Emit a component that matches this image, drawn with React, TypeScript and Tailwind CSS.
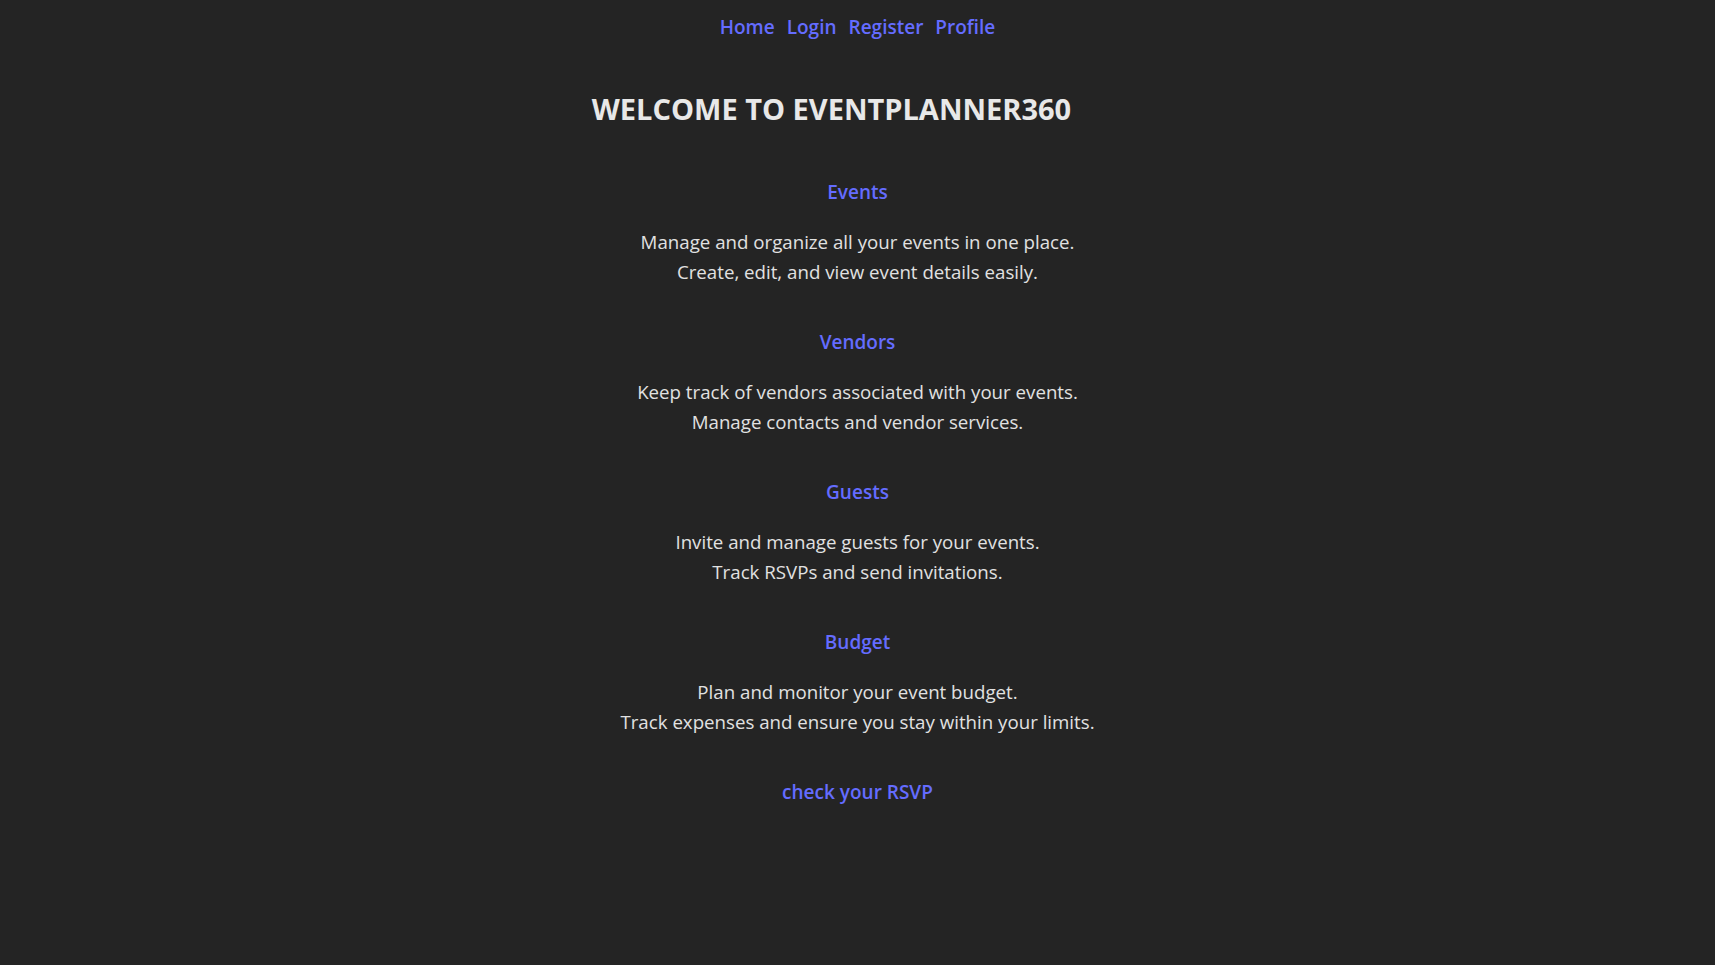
import React from "react";

const sections = [
  { title: "Events", lines: ["Manage and organize all your events in one place.", "Create, edit, and view event details easily."] },
  { title: "Vendors", lines: ["Keep track of vendors associated with your events.", "Manage contacts and vendor services."] },
  { title: "Guests", lines: ["Invite and manage guests for your events.", "Track RSVPs and send invitations."] },
  { title: "Budget", lines: ["Plan and monitor your event budget.", "Track expenses and ensure you stay within your limits."] },
];

export default function App() {
  return (
    <div
      className="min-h-[965px] w-full bg-[#242424] text-[#e1e1e1] flex flex-col items-center"
      style={{ fontFamily: '"Open Sans", "Noto Sans", sans-serif' }}
    >
      <nav className="pt-[13px] flex gap-[12px] text-[19px] leading-[29px] font-semibold text-[#646cff]">
        <a href="#">Home</a>
        <a href="#">Login</a>
        <a href="#">Register</a>
        <a href="#">Profile</a>
      </nav>
      <h1 className="mt-[49px] mr-[52px] text-[29px] leading-[36px] font-bold text-[#e8e8e8] uppercase">
        Welcome to EventPlanner360
      </h1>
      <div className="mt-[51px] flex flex-col items-center">
        {sections.map((s) => (
          <div key={s.title} className="flex flex-col items-center mb-[42px]">
            <a href="#" className="text-[19px] leading-[29px] font-semibold text-[#646cff]">
              {s.title}
            </a>
            <p className="mt-[20px] text-[18.7px] leading-[29.5px] text-center">
              {s.lines[0]}
              <br />
              {s.lines[1]}
            </p>
          </div>
        ))}
        <a href="#" className="text-[19px] leading-[29px] font-semibold text-[#646cff]">
          check your RSVP
        </a>
      </div>
    </div>
  );
}
